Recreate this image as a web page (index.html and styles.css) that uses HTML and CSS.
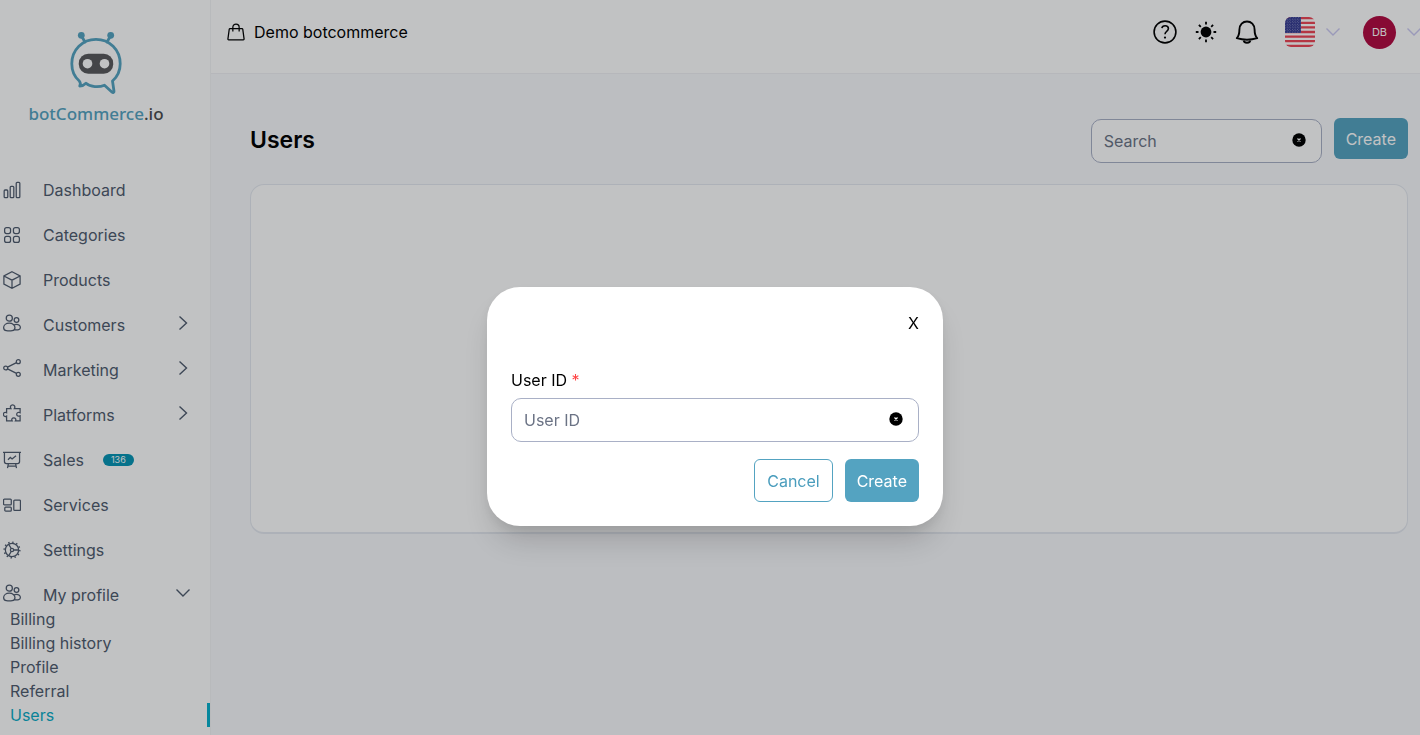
FILE: index.html
```html
<!DOCTYPE html>
<html lang="en">
<head>
<meta charset="utf-8">
<title>Users - botCommerce.io</title>
<link rel="stylesheet" href="styles.css">
</head>
<body>
<svg class="sprite" aria-hidden="true">
  <symbol id="people" viewBox="0 0 20 20"><circle cx="7" cy="4.600" r="3.400"/><circle cx="15" cy="6.600" r="2.600"/><path d="M7 10.200c-3.600 0-6.300 2.100-6.300 4.900 0 2.200 1.700 3.400 3 3.400 2.200.4 4.400.4 6.600 0 1.300 0 3-1.200 3-3.400 0-2.800-2.700-4.900-6.300-4.900zM12 12.200c.8-.5 1.800-.8 2.900-.8 2.500 0 4.400 1.700 4.400 3.600 0 1.200-.7 2.100-1.800 2.300-1.500.3-3 .3-4.500 0"/></symbol>
  <symbol id="chev-right" viewBox="0 0 16 16"><path d="M4.500 1.500 11.500 8l-7 6.500"/></symbol>
  <symbol id="chev-down" viewBox="0 0 16 16"><path d="M1.500 4.500 8 11l6.500-6.500"/></symbol>
  <symbol id="clear" viewBox="0 0 14 14"><circle cx="7" cy="7" r="6.700" fill="#000" stroke="none"/><path d="m5.500 5.500 3 3m0-3-3 3" stroke="#fff" stroke-width="1.200"/></symbol>
</svg>
<div class="app">
  <aside class="sidebar">
    <a class="brand" href="#">
      <svg class="brand-mark" viewBox="0 0 54 64">
        <path d="M12.500 5 16 11M41.500 5 38 11"/>
        <circle cx="12.300" cy="4.300" r="3.400" fill="#54a3c1" stroke="none"/>
        <circle cx="41.700" cy="4.300" r="3.400" fill="#54a3c1" stroke="none"/>
        <path d="M10.300 50C5 45.500 2.800 39.500 2.800 32.800 2.800 18.500 13.600 8.300 27 8.300s24.200 10.200 24.200 24.500c0 6.700-2.600 12.700-7.700 17.200L45 60.300c.1 1.200-1 1.600-1.900.9L35.500 54.200C30 56.600 21.500 56.300 17 52.200c-1.800 1.800-4 2.700-6.300 2.800C11.800 53.400 11.600 51.800 10.300 50z"/>
        <rect x="9.800" y="22.800" width="34.400" height="20" rx="9.500" fill="#59595b" stroke="none"/>
        <circle cx="18.500" cy="32.700" r="4.800" fill="#fff" stroke="none"/>
        <circle cx="35.500" cy="32.700" r="4.800" fill="#fff" stroke="none"/>
      </svg>
      <span class="brand-name">botCommerce<span class="brand-tld">.io</span></span>
    </a>
    <nav class="nav">
      <a href="#"><svg class="icon" viewBox="0 0 20 20"><rect x="1.300" y="10" width="4" height="8.500" rx="1"/><rect x="8" y="6" width="4" height="12.500" rx="1"/><rect x="14.700" y="1.500" width="4" height="17" rx="1"/></svg>Dashboard</a>
      <a href="#"><svg class="icon" viewBox="0 0 20 20"><rect x="1.800" y="1.800" width="6.600" height="6.600" rx="2.200"/><rect x="11.600" y="1.800" width="6.600" height="6.600" rx="2.200"/><rect x="1.800" y="11.600" width="6.600" height="6.600" rx="2.200"/><rect x="11.600" y="11.600" width="6.600" height="6.600" rx="2.200"/></svg>Categories</a>
      <a href="#"><svg class="icon" viewBox="0 0 20 20"><path d="m10 .8 9 4.700v9L10 19.200l-9-4.700v-9zM1 5.500l9 4.700 9-4.700M10 10.200v9"/></svg>Products</a>
      <a href="#"><svg class="icon lift"><use href="#people"/></svg>Customers<svg class="chevron"><use href="#chev-right"/></svg></a>
      <a href="#"><svg class="icon lift" viewBox="0 0 20 20"><circle cx="3" cy="10" r="2.200"/><circle cx="17" cy="3" r="2.200"/><circle cx="17" cy="17" r="2.200"/><path d="M5 9 15 4M5 11l10 5"/></svg>Marketing<svg class="chevron"><use href="#chev-right"/></svg></a>
      <a href="#"><svg class="icon lift" viewBox="0 0 20 20"><path d="M4 5.200h4.800c-1.300-2-.2-4.200 1.900-4.200s3.200 2.200 1.900 4.200h6.400v4.500c-1.800-1.100-3.800-.2-3.800 1.700s2 2.800 3.800 1.700v5.700h-5.200c1.100-1.800 0-3.500-1.800-3.500s-2.900 1.700-1.800 3.500H4v-5.300c-1.800 1.100-3.500 0-3.500-1.900S2.200 8.600 4 9.700z"/></svg>Platforms<svg class="chevron"><use href="#chev-right"/></svg></a>
      <a href="#"><svg class="icon" viewBox="0 0 20 20"><path d="M0 1.500h20M1.600 1.500v10.300c0 1.400.8 2.200 2.200 2.200h12.400c1.400 0 2.200-.8 2.200-2.200V1.500M6 14 5 19M14 14l1 5M5.500 16.800h9M5.500 9.800l2.600-2.600 2 1.700 4.400-3.700"/></svg>Sales<span class="badge">136</span></a>
      <a href="#"><svg class="icon" viewBox="0 0 20 20"><rect x=".6" y="3.400" width="8.600" height="6.400" rx="1"/><rect x="2" y="12.400" width="7.200" height="4.400" rx="1"/><rect x="12" y="4.600" width="7.400" height="11.400" rx="1"/></svg>Services</a>
      <a href="#"><svg class="icon" viewBox="0 0 20 20"><circle cx="10" cy="10" r="7.400"/><circle cx="10" cy="10" r="8.700" stroke-width="1.600" stroke-dasharray="1.600 2.955"/><circle cx="10" cy="10" r="1.800"/><path d="M11.800 10h5.600M9.100 8.400 6.400 3.700M9.100 11.600l-2.700 4.700"/></svg>Settings</a>
      <a href="#"><svg class="icon lift"><use href="#people"/></svg>My profile<svg class="chevron"><use href="#chev-down"/></svg></a>
    </nav>
    <nav class="subnav" aria-label="My profile">
      <a href="#">Billing</a>
      <a href="#">Billing history</a>
      <a href="#">Profile</a>
      <a href="#">Referral</a>
      <a class="current" href="#" aria-current="page">Users</a>
    </nav>
  </aside>
  <div class="content">
    <header class="topbar">
      <a class="shop" href="#">
        <svg class="icon" viewBox="0 0 20 20"><path d="M3.300 6.200h13.400c.4 0 .7.300.8.700l1.500 11c0 .5-.3.800-.8.800H1.800c-.5 0-.8-.3-.8-.8l1.500-11c.1-.4.400-.7.800-.7zM6.500 9.500V4.700a3.500 3.500 0 0 1 7 0v4.800"/></svg>
        Demo botcommerce
      </a>
      <div class="actions">
        <button type="button" aria-label="Help"><svg viewBox="0 0 24 24"><circle cx="12" cy="12" r="10.900"/><path d="M8.900 8.200c.2-1.600 1.500-2.500 3.200-2.500 1.900 0 3.300 1.200 3.300 2.900 0 1.300-.7 2-1.700 2.700-1.200.9-1.700 1.500-1.700 3"/><circle cx="12" cy="17.600" r="1.100" fill="#000" stroke="none"/></svg></button>
        <button type="button" aria-label="Theme"><svg viewBox="0 0 24 24"><circle cx="12" cy="12" r="5.400" fill="#000" stroke="none"/><path d="M12 1.800v2.700M12 19.500v2.700M1.800 12h2.700M19.500 12h2.700M4.900 4.900l1.900 1.900M17.200 17.200l1.900 1.900M19.100 4.900l-1.900 1.900M6.800 17.200l-1.900 1.900" stroke-width="1.800"/></svg></button>
        <button type="button" aria-label="Notifications"><svg viewBox="0 0 24 24"><path d="M1.800 18.200c2-2.200 2.600-4.500 2.600-8.500C4.400 4.600 7.900 1.500 12 1.500s7.600 3.100 7.600 8.200c0 4 .6 6.300 2.600 8.500-6.400 1.900-14 1.900-20.400 0zM8.500 19.500c.1 2 1.500 3.300 3.500 3.300s3.400-1.300 3.500-3.300" stroke-width="1.900" stroke-linejoin="round"/></svg></button>
        <button class="language" type="button" aria-label="Language">
          <svg class="flag" viewBox="0 0 30 30">
            <defs>
              <clipPath id="flag-clip"><rect width="30" height="30" rx="6"/></clipPath>
              <pattern id="stars" width="2.600" height="2.600" patternUnits="userSpaceOnUse"><g fill="#fff" stroke="none"><circle cx=".7" cy=".7" r=".38"/><circle cx="2" cy="2" r=".38"/></g></pattern>
            </defs>
            <g clip-path="url(#flag-clip)" stroke="none">
              <path fill="#fff" d="M0 0h30v30H0z"/>
              <path stroke="#ee4455" stroke-width="2.300" d="M0 1.150h30M0 5.800h30M0 10.400h30M0 15h30M0 19.600h30M0 24.200h30M0 28.850h30"/>
              <path fill="#30368f" d="M0 0h16v16H0z"/><path fill="url(#stars)" d="M0 0h16v16H0z"/>
            </g>
          </svg>
          <svg class="chevron pale"><use href="#chev-down"/></svg>
        </button>
        <button class="account" type="button" aria-label="Account">
          <span class="avatar">DB</span>
          <svg class="chevron pale"><use href="#chev-down"/></svg>
        </button>
      </div>
    </header>
    <main class="page">
      <div class="page-head">
        <h1>Users</h1>
        <div class="field search">
          <input type="text" placeholder="Search" aria-label="Search">
          <button class="clear" type="button" aria-label="Clear search"><svg><use href="#clear"/></svg></button>
        </div>
        <button class="btn primary" type="button">Create</button>
      </div>
      <section class="panel" aria-label="User list"></section>
    </main>
  </div>
</div>
<div class="overlay">
  <form class="modal" role="dialog" aria-modal="true" aria-label="Create user">
    <button class="close" type="button" aria-label="Close">X</button>
    <label for="user-id">User ID <span class="required">*</span></label>
    <div class="field">
      <input id="user-id" type="text" placeholder="User ID">
      <button class="clear" type="button" aria-label="Clear user ID"><svg><use href="#clear"/></svg></button>
    </div>
    <div class="modal-actions">
      <button class="btn outline" type="button">Cancel</button>
      <button class="btn primary" type="button">Create</button>
    </div>
  </form>
</div>
</body>
</html>
```

FILE: styles.css
```css
* { box-sizing: border-box; }

body {
  margin: 0;
  overflow: hidden;
  background: #f9fafd;
  color: #000;
  font: 16px/24px Inter, "Liberation Sans", sans-serif;
}

a { color: inherit; text-decoration: none; }

button {
  padding: 0;
  border: 0;
  background: none;
  color: inherit;
  font: inherit;
  cursor: pointer;
}

svg { display: block; flex: none; fill: none; stroke: currentColor; }

.sprite { position: absolute; width: 0; height: 0; }

.app { display: flex; min-height: 100vh; }

/* Sidebar */
.sidebar {
  flex: none;
  width: 211px;
  background: #fff;
  border-right: 1px solid #f3f4f6;
  color: #4f5b6e;
}

.brand {
  display: flex;
  flex-direction: column;
  align-items: center;
  gap: 7px;
  padding: 31px 18px 0 0;
}

.brand-mark {
  width: 54px;
  height: 64px;
  stroke: #54a3c1;
  stroke-width: 2.8;
  stroke-linecap: round;
  stroke-linejoin: round;
}

.brand-name {
  color: #54a3c1;
  font: 500 17px/24px "Noto Sans", sans-serif;
}

.brand-tld { color: #4a4a4c; }

.nav { padding-top: 41px; }

.nav a {
  display: flex;
  align-items: center;
  height: 45px;
  padding: 0 19px 0 3px;
}

.icon { width: 18px; height: 18px; margin-right: 22px; stroke-width: 1.4; }

.lift { margin-bottom: 4px; }

.chevron { width: 16px; height: 16px; margin-left: auto; stroke-width: 1.4; }

.nav .chevron { margin-bottom: 4px; }

.badge {
  margin-left: 19px;
  padding: 0 8px;
  border-radius: 6px;
  background: #0694b4;
  color: #fff;
  font-size: 9px;
  line-height: 12px;
}

.subnav { margin-top: -10px; }

.subnav a { display: block; padding-left: 10px; line-height: 24px; }

.subnav .current {
  border-right: 3px solid #06b0cc;
  color: #0aabc6;
}

/* Top bar */
.content { flex: 1; min-width: 0; }

.topbar {
  display: flex;
  align-items: center;
  justify-content: space-between;
  height: 74px;
  padding: 0 0 9px 16px;
  background: #fff;
  border-bottom: 1px solid #f0f1f4;
}

.shop { display: flex; align-items: center; }

.shop .icon { margin-right: 9px; }

.actions { display: flex; align-items: center; gap: 17px; margin-right: -2px; }

.actions > button > svg:only-child { width: 24px; height: 24px; stroke-width: 1.6; }

.language, .account { display: flex; align-items: center; gap: 10px; }

.language { margin-left: 9px; }

.account { margin-left: 5px; }

.flag { width: 30px; height: 30px; }

.pale { color: #cbc8f2; }

.avatar {
  width: 33px;
  border-radius: 50%;
  background: #b20a40;
  color: #fff;
  font-size: 11px;
  line-height: 33px;
}

/* Page */
.page { padding: 44px 12px 0 39px; }

.page-head { display: flex; align-items: flex-start; gap: 12px; }

h1 { flex: 1; margin: 6px 0 0; font-size: 23px; font-weight: 600; line-height: 32px; }

.field {
  display: flex;
  align-items: center;
  height: 44px;
  padding: 0 15px 0 12px;
  border: 1px solid #a9b0c6;
  border-radius: 10px;
  background: #fff;
}

.field input {
  flex: 1;
  min-width: 0;
  padding: 0;
  border: 0;
  outline: 0;
  background: none;
  color: inherit;
  font: inherit;
}

.field input::placeholder { color: #6b7385; opacity: 1; }

.search { width: 231px; margin-top: 1px; }

.clear { margin-bottom: 2px; }

.clear svg { width: 14px; height: 14px; }

.btn {
  height: 41px;
  padding: 0 12px;
  border-radius: 6px;
}

.primary { background: #54a3c1; color: #fff; }

.outline { border: 1px solid #54a3c1; color: #4a9dbd; }

.panel {
  min-height: 350px;
  margin-top: 21px;
  border: 1px solid #e5e9f0;
  border-bottom-width: 2px;
  border-radius: 14px;
  background: #fff;
}

/* Dialog */
.overlay {
  position: fixed;
  inset: 0;
  display: grid;
  place-items: center;
  padding: 78px 0 0 10px;
  background: rgb(8 12 14 / 25%);
}

.modal {
  display: flex;
  flex-direction: column;
  width: 456px;
  padding: 24px;
  border-radius: 33px;
  background: #fff;
  box-shadow: 0 20px 30px -8px rgb(0 0 0 / 18%), 0 4px 10px rgb(0 0 0 / 5%);
}

.close { align-self: flex-end; margin-bottom: 33px; }

.modal label { margin-bottom: 6px; }

.required { color: #f44; }

.modal-actions {
  display: flex;
  justify-content: flex-end;
  gap: 12px;
  margin-top: 17px;
}

.modal-actions .btn { height: 43px; }
```
